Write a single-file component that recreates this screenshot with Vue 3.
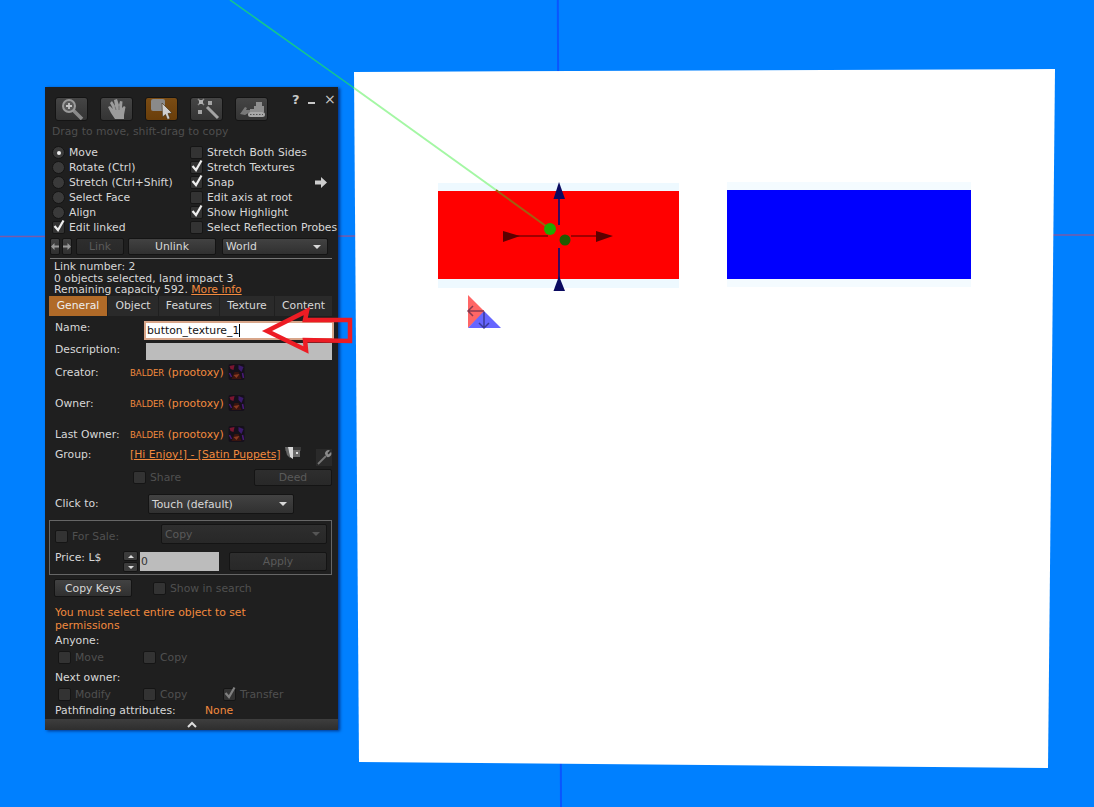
<script setup>
const leftOptions = [
  { label: 'Move', kind: 'radio', on: true },
  { label: 'Rotate (Ctrl)', kind: 'radio' },
  { label: 'Stretch (Ctrl+Shift)', kind: 'radio' },
  { label: 'Select Face', kind: 'radio' },
  { label: 'Align', kind: 'radio' },
  { label: 'Edit linked', kind: 'check', on: true }
]
const rightOptions = [
  { label: 'Stretch Both Sides' },
  { label: 'Stretch Textures', on: true },
  { label: 'Snap', on: true, arrow: true },
  { label: 'Edit axis at root' },
  { label: 'Show Highlight', on: true },
  { label: 'Select Reflection Probes' }
]
const tabs = [
  { label: 'General', width: 58, active: true },
  { label: 'Object', width: 51 },
  { label: 'Features', width: 61 },
  { label: 'Texture', width: 55 },
  { label: 'Content', width: 58 }
]
const people = ['Creator:', 'Owner:', 'Last Owner:']
</script>

<template>
  <div class="scene">
    <svg class="world" width="1094" height="807" viewBox="0 0 1094 807">
      <rect width="1094" height="807" fill="#0080ff" />
      <line x1="0" y1="236.500" x2="1094" y2="235" stroke="#7a5aa8" stroke-width="1.500" />
      <line x1="557.800" y1="0" x2="561" y2="807" stroke="#0a55ff" stroke-width="2" />
      <polygon points="354,72 1055,69 1048,768 359,762" fill="#fff" />
      <rect x="438" y="183" width="241" height="105" fill="#eef9ff" />
      <rect x="727" y="182" width="244" height="105" fill="#f4fbff" />
      <rect x="438" y="191" width="241" height="88" fill="#ff0000" />
      <rect x="727" y="190" width="244" height="89" fill="#0000ff" />
      <line x1="230" y1="0" x2="354" y2="88" stroke="#14c88c" stroke-width="1.500" />
      <line x1="354" y1="88" x2="496" y2="190" stroke="#a4f7a4" stroke-width="2" />
      <line x1="496" y1="190" x2="550" y2="229" stroke="#a06010" stroke-width="2" />

      <line x1="559" y1="195" x2="559" y2="225" stroke="#3a0a5c" stroke-width="2" />
      <line x1="559" y1="248" x2="559" y2="280" stroke="#3a0a5c" stroke-width="2" />
      <polygon points="559,182 553.500,199 565,199" fill="#0a0a60" />
      <polygon points="559,276 553.500,291 565,291" fill="#0a0a60" />
      <line x1="515" y1="236" x2="548" y2="236" stroke="#a00000" stroke-width="2" />
      <line x1="571" y1="236" x2="600" y2="236" stroke="#a00000" stroke-width="2" />
      <polygon points="503,231 520,236 503,242" fill="#5c0000" />
      <polygon points="596,231 613,236 596,242" fill="#5c0000" />
      <circle cx="550" cy="229" r="6" fill="#22aa00" />
      <circle cx="565" cy="240" r="5.500" fill="#1f5a00" />

      <polygon points="468,295 485,312 468,328" fill="#ff6666" />
      <polygon points="468,328 484,311 501,328" fill="#6666ff" />
      <path d="M468 311 H484 M473 306 L468 311 L473 316" fill="none" stroke="#8a3a50" stroke-width="1.500" />
      <path d="M484 312 V328 M479 323 L484 328 L489 323" fill="none" stroke="#3a3a9a" stroke-width="1.500" />
    </svg>

    <div class="panel">
      <div class="win-controls">
        <span class="help">?</span>
        <span class="minimize"></span>
        <span class="close">×</span>
      </div>

      <div class="toolbar">
        <button class="tool">
          <svg width="26" height="22" viewBox="0 0 26 22">
            <path d="M14 12 L23 21" stroke="#8a8a8a" stroke-width="3.500" />
            <circle cx="10" cy="8" r="6" fill="#5a5a5a" stroke="#9a9a9a" stroke-width="2" />
            <path d="M7 8H13M10 5V11" stroke="#c4c4c4" stroke-width="1.800" />
          </svg>
        </button>
        <button class="tool">
          <svg width="26" height="22" viewBox="0 0 26 22">
            <path d="M11 21 L7 15 L4 9 L6 8 L9 11 L6 5 L8 3 L11 8 L10 2 L13 1 L15 7 L16 3 L18.500 3.500 L18 10 L20 8 L21.500 9 L20 17 L20 21 Z" fill="#9c9c9c" />
            <path d="M11 8.500L12 12M15 7.500L15 12" stroke="#666" stroke-width="0.800" />
          </svg>
        </button>
        <button class="tool active">
          <svg width="26" height="22" viewBox="0 0 26 22">
            <rect x="2" y="1" width="14" height="12" rx="2" fill="#8a8a8a" />
            <path d="M13 5 L23 15 L19 15.500 L21 20.500 L18.500 21.500 L16.500 16.500 L13.500 19 Z" fill="#cfcfcf" stroke="#3a2a10" stroke-width="0.600" />
          </svg>
        </button>
        <button class="tool">
          <svg width="26" height="22" viewBox="0 0 26 22">
            <path d="M13 9 L24 20" stroke="#a4a4a4" stroke-width="3" />
            <path d="M4 1 L10 7 M10 1 L4 7" stroke="#8a8a8a" stroke-width="1.500" />
            <rect x="5" y="2" width="4" height="4" fill="#b0b0b0" />
            <rect x="14" y="3" width="4" height="4" fill="#a4a4a4" />
            <rect x="4" y="12" width="4" height="4" fill="#a4a4a4" />
          </svg>
        </button>
        <button class="tool">
          <svg width="28" height="20" viewBox="0 0 28 20">
            <path d="M12 10 H16 V7 H18 V3 H24 V7 H26 V13 H12 Z" fill="#8e8e8e" />
            <path d="M2 15 L7 8 L9 9 L8 11 H12 V13 L7 16 Z" fill="#7a7a7a" />
            <rect x="10" y="13" width="17" height="5" rx="2.500" fill="#a8a8a8" />
            <path d="M12 15.500H25" stroke="#555" stroke-width="1" stroke-dasharray="1.500 1.500" />
          </svg>
        </button>
      </div>

      <div class="hint">Drag to move, shift-drag to copy</div>

      <div class="options">
        <div class="opt-col left">
          <div v-for="o in leftOptions" :key="o.label" class="opt">
            <span v-if="o.kind === 'radio'" class="radio" :class="{ on: o.on }"></span>
            <span v-else class="check">
              <svg v-if="o.on" class="tick" width="14" height="14" viewBox="0 0 14 14"><path d="M2.500 7 L6 11 L11.500 1.500" fill="none" stroke="#eee" stroke-width="2.200" /></svg>
            </span>
            <span>{{ o.label }}</span>
          </div>
        </div>
        <div class="opt-col right">
          <div v-for="o in rightOptions" :key="o.label" class="opt">
            <span class="check">
              <svg v-if="o.on" class="tick" width="14" height="14" viewBox="0 0 14 14"><path d="M2.500 7 L6 11 L11.500 1.500" fill="none" stroke="#eee" stroke-width="2.200" /></svg>
            </span>
            <span class="nowrap">{{ o.label }}</span>
            <svg v-if="o.arrow" class="snap-arrow" width="12" height="11" viewBox="0 0 12 11"><path d="M0 3.500H6V0L12 5.500L6 11V7.500H0Z" fill="#ccc" /></svg>
          </div>
        </div>
      </div>

      <div class="actions">
        <button class="btn tiny"><svg width="8" height="7" viewBox="0 0 8 7"><path d="M0 3.500L3.500 0V2.500H8V4.500H3.500V7Z" fill="#999" /></svg></button>
        <button class="btn tiny gap2"><svg width="8" height="7" viewBox="0 0 8 7"><path d="M8 3.500L4.500 0V2.500H0V4.500H4.500V7Z" fill="#999" /></svg></button>
        <button class="btn dim link-btn">Link</button>
        <button class="btn unlink-btn">Unlink</button>
        <button class="btn combo world-combo"><span>World</span><i class="caret"></i></button>
      </div>

      <div class="sep"></div>

      <div class="info">
        <div class="l1">Link number: 2</div>
        <div class="l1">0 objects selected, land impact 3</div>
        <div class="l2">Remaining capacity 592. <a class="orange-link">More info</a></div>
      </div>

      <div class="tabs">
        <div
          v-for="t in tabs"
          :key="t.label"
          class="tab"
          :class="{ active: t.active }"
          :style="{ width: t.width + 'px' }"
        >{{ t.label }}</div>
      </div>

      <div class="row name-row">
        <span class="lbl">Name:</span>
        <div class="name-input">button_texture_1<i class="cursor"></i></div>
      </div>
      <div class="row desc-row">
        <span class="lbl">Description:</span>
        <div class="desc-input"></div>
      </div>

      <div v-for="p in people" :key="p" class="person">
        <span class="lbl">{{ p }}</span>
        <span class="person-name"><span class="small-caps">BALDER</span> (prootoxy)</span>
        <svg class="avatar" width="17" height="16" viewBox="0 0 16 16">
          <rect width="16" height="16" rx="2" fill="#15101a" />
          <path d="M1 2L6 1L5 6L2 5Z" fill="#7a1530" />
          <path d="M10 1L15 3L13 8L10 5Z" fill="#3a1a6a" />
          <path d="M3 15L6 8L10 8L13 15Z" fill="#3a1510" />
          <path d="M5 11L8 14L11 10Z" fill="#8a3a20" />
          <path d="M1 9L3 13M14 9L15 14" stroke="#4a1a7a" stroke-width="1.500" />
        </svg>
      </div>

      <div class="group-row">
        <span class="lbl">Group:</span>
        <a class="orange-link group-link">[Hi Enjoy!] - [Satin Puppets]</a>
        <svg class="group-icon" width="16" height="14" viewBox="0 0 16 14">
          <rect width="16" height="4" fill="#3a3a3a" />
          <path d="M0 0H3L5 11L2 8Z" fill="#666" />
          <path d="M3 0H8L8 12L5 10Z" fill="#d8d8d8" />
          <rect x="8" y="3" width="7" height="7" fill="#6a6a6a" />
          <rect x="11" y="5" width="2" height="2" fill="#ddd" />
        </svg>
        <span class="wrench-btn">
          <svg width="16" height="17" viewBox="0 0 16 17"><path d="M2 15L10 7" stroke="#777" stroke-width="1.800" /><path d="M9 5A3.500 3.500 0 0 1 14 1.500L11.500 4L12.500 5.500L15 3A3.500 3.500 0 0 1 11 8Z" fill="#8a8a8a" /></svg>
        </span>
      </div>

      <div class="share-row">
        <span class="check"></span>
        <span class="dim-text">Share</span>
        <button class="btn dim deed">Deed</button>
      </div>

      <div class="click-row">
        <span class="lbl">Click to:</span>
        <button class="btn combo click-combo"><span>Touch  (default)</span><i class="caret"></i></button>
      </div>

      <div class="sale-box">
        <div class="sale-top">
          <span class="check"></span>
          <span class="dim-text sale-label">For Sale:</span>
          <button class="btn dim combo sale-combo"><span>Copy</span><i class="caret dark"></i></button>
        </div>
        <div class="sale-bottom">
          <span class="price-label">Price: L$</span>
          <div class="spinner">
            <button class="spin"><i class="up"></i></button>
            <button class="spin"><i class="down"></i></button>
          </div>
          <div class="price-input">0</div>
          <button class="btn dim apply">Apply</button>
        </div>
      </div>

      <div class="keys-row">
        <button class="btn keys">Copy Keys</button>
        <span class="check"></span>
        <span class="dim-text">Show in search</span>
      </div>

      <div class="warn">You must select entire object to set<br />permissions</div>

      <div class="section-label anyone">Anyone:</div>
      <div class="perm-row r1">
        <span class="check"></span><span class="dim-text perm-a">Move</span>
        <span class="check"></span><span class="dim-text">Copy</span>
      </div>
      <div class="section-label next">Next owner:</div>
      <div class="perm-row r2">
        <span class="check"></span><span class="dim-text perm-a">Modify</span>
        <span class="check"></span><span class="dim-text perm-b">Copy</span>
        <span class="check">
          <svg class="tick" width="14" height="14" viewBox="0 0 14 14"><path d="M2.500 7 L6 11 L11.500 1.500" fill="none" stroke="#808080" stroke-width="2.200" /></svg>
        </span>
        <span class="dim-text">Transfer</span>
      </div>
      <div class="path-row">
        <span class="path-label">Pathfinding attributes:</span>
        <span class="orange">None</span>
      </div>

      <div class="footer">
        <svg width="10" height="7" viewBox="0 0 10 7"><path d="M1 6L5 2L9 6" fill="none" stroke="#ddd" stroke-width="2" /></svg>
      </div>
    </div>

    <svg class="annotation" width="1094" height="807" viewBox="0 0 1094 807">
      <polygon points="267,331 307,311 305,320 350,320 350,341 305,340 306,350" fill="none" stroke="#ed1c24" stroke-width="4.500" />
    </svg>
  </div>
</template>

<style>
body {
  margin: 0;
  background: #0080ff;
}
</style>

<style scoped>
.scene {
  position: relative;
  width: 1094px;
  height: 807px;
  overflow: hidden;
  font-family: "DejaVu Sans", sans-serif;
  font-size: 10.8px;
  color: #d8d8d8;
}

.world,
.annotation {
  position: absolute;
  left: 0;
  top: 0;
}

.annotation {
  pointer-events: none;
}

.panel {
  position: absolute;
  left: 45px;
  top: 87px;
  width: 293px;
  height: 643px;
  background: #1f1f1f;
  box-shadow: 2px 1px 3px rgba(0, 0, 60, 0.6);
  display: flex;
  flex-direction: column;
}

button {
  font-family: inherit;
  font-size: 10.8px;
  padding: 0;
  margin: 0;
}

.win-controls {
  position: absolute;
  right: 5px;
  top: 5px;
  display: flex;
  align-items: center;
  color: #c8c8c8;
}

.help {
  font-weight: bold;
  font-size: 13px;
  width: 16px;
}

.minimize {
  width: 7px;
  height: 2px;
  background: #c8c8c8;
  margin: 7px 9px 0 0;
}

.close {
  font-size: 14px;
  line-height: 14px;
  width: 9px;
  margin-top: -1px;
}

.toolbar {
  display: flex;
  gap: 12px;
  margin-top: 10px;
  padding-left: 10px;
}

.tool {
  width: 33px;
  height: 24px;
  border: 1px solid #141414;
  border-radius: 3px;
  background: linear-gradient(#454545, #343434);
  display: flex;
  align-items: center;
  justify-content: center;
}

.tool.active {
  background: linear-gradient(#7a4c14, #6a3e0a);
}

.hint {
  margin-top: 3px;
  height: 15px;
  line-height: 15px;
  padding-left: 7px;
  color: #4e4e4e;
}

.options {
  display: flex;
  margin-top: 6px;
  height: 90px;
}

.opt-col.left {
  width: 145px;
  flex: none;
  padding-left: 7px;
  box-sizing: border-box;
}

.opt-col.right {
  flex: 1;
  min-width: 0;
}

.opt {
  display: flex;
  align-items: center;
  height: 15px;
  gap: 4px;
  position: relative;
}

.nowrap {
  white-space: nowrap;
}

.radio {
  width: 13px;
  height: 13px;
  border-radius: 50%;
  background: #3a3a3a;
  border: 1px solid #141414;
  box-sizing: border-box;
  display: block;
  position: relative;
  flex: none;
}

.radio.on::after {
  content: "";
  position: absolute;
  left: 3.500px;
  top: 3.500px;
  width: 4px;
  height: 4px;
  border-radius: 50%;
  background: #eee;
}

.check {
  width: 13px;
  height: 13px;
  flex: none;
  border: 1px solid #151515;
  border-radius: 2px;
  background: #333;
  box-sizing: border-box;
  position: relative;
  display: block;
}

.tick {
  position: absolute;
  left: -1px;
  top: -3px;
}

.snap-arrow {
  position: absolute;
  left: 125px;
  top: 2px;
}

.actions {
  display: flex;
  margin-top: 3px;
  padding-left: 5px;
  height: 17px;
}

.btn {
  height: 17px;
  border: 1px solid #141414;
  border-radius: 2px;
  background: linear-gradient(#424242, #303030);
  color: #d8d8d8;
  display: flex;
  align-items: center;
  justify-content: center;
  box-sizing: border-box;
}

.btn.dim {
  background: linear-gradient(#2e2e2e, #282828);
  color: #5a5a5a;
}

.btn.tiny {
  width: 10px;
}

.gap2 {
  margin-left: 2px;
}

.link-btn {
  width: 48px;
  margin-left: 4px;
}

.unlink-btn {
  width: 88px;
  margin-left: 4px;
}

.combo {
  justify-content: space-between;
  padding: 0 6px 0 3px;
  white-space: pre;
}

.world-combo {
  width: 106px;
  margin-left: 6px;
}

.caret {
  width: 0;
  height: 0;
  border-left: 4px solid transparent;
  border-right: 4px solid transparent;
  border-top: 4px solid #d8d8d8;
}

.caret.dark {
  border-top-color: #555;
}

.sep {
  height: 1px;
  background: #777;
  margin: 3px 6px 0 5px;
}

.info {
  padding-left: 9px;
  color: #d8d8d8;
  margin-top: 2px;
}

.l1 {
  height: 12px;
  line-height: 12px;
}

.l2 {
  height: 10px;
  line-height: 10px;
}

.orange-link {
  color: #f28a3e;
  text-decoration: underline;
}

.orange {
  color: #f28a3e;
}

.tabs {
  display: flex;
  height: 20px;
  margin: 1px 0 0 4px;
}

.tab {
  background: #2a2a2a;
  text-align: center;
  line-height: 19px;
  border-left: 1px solid #1f1f1f;
  box-sizing: border-box;
}

.tab.active {
  background: #b06a28;
  color: #eee;
  border-left: none;
}

.row {
  display: flex;
  align-items: flex-start;
  padding-left: 10px;
}

.lbl {
  line-height: 14px;
  height: 12px;
  display: block;
}

.name-row {
  margin-top: 5px;
  height: 19px;
}

.name-row .lbl {
  width: 89px;
}

.name-input {
  width: 190px;
  height: 19px;
  box-sizing: border-box;
  background: #fff;
  border: 2px solid #d8a68a;
  color: #111;
  line-height: 15px;
  padding-left: 1px;
  white-space: nowrap;
}

.cursor {
  display: inline-block;
  width: 1px;
  height: 13px;
  background: #000;
  vertical-align: -3px;
}

.desc-row {
  margin-top: 3px;
  height: 17px;
}

.desc-row .lbl {
  width: 91px;
}

.desc-input {
  width: 186px;
  height: 17px;
  background: #bcbcbc;
}

.person {
  display: flex;
  align-items: center;
  height: 12px;
  margin-top: 19px;
  padding-left: 10px;
}

.person .lbl {
  width: 75px;
}

.desc-row + .person {
  margin-top: 6px;
}

.person-name {
  color: #f28a3e;
  white-space: nowrap;
}

.small-caps {
  font-size: 8.500px;
}

.avatar {
  margin-left: 4px;
  flex: none;
}

.group-row {
  position: relative;
  display: flex;
  align-items: center;
  height: 12px;
  margin-top: 8px;
  padding-left: 10px;
}

.group-row .lbl {
  width: 75px;
}

.group-link {
  white-space: nowrap;
}

.group-icon {
  margin-left: 4px;
  flex: none;
}

.wrench-btn {
  position: absolute;
  left: 271px;
  top: 1px;
  width: 16px;
  height: 17px;
  background: #2a2a2a;
}

.share-row {
  display: flex;
  align-items: center;
  height: 17px;
  margin-top: 9px;
  padding-left: 88px;
  gap: 4px;
}

.dim-text {
  color: #505050;
  white-space: nowrap;
}

.deed {
  width: 78px;
  position: absolute;
  left: 209px;
}

.click-row {
  display: flex;
  align-items: center;
  height: 20px;
  margin-top: 8px;
  padding-left: 10px;
}

.click-row .lbl {
  width: 93px;
  margin-top: -2px;
}

.click-combo {
  width: 146px;
  height: 20px;
}

.sale-box {
  height: 55px;
  margin: 6px 6px 0 4px;
  border: 1px solid #666;
  box-sizing: border-box;
}

.sale-top {
  display: flex;
  align-items: center;
  height: 20px;
  margin-top: 3px;
  padding-left: 5px;
}

.sale-top .check {
  margin-top: 4px;
}

.sale-label {
  width: 89px;
  margin-left: 4px;
  margin-top: 4px;
}

.sale-combo {
  width: 166px;
  height: 20px;
}

.sale-bottom {
  display: flex;
  align-items: flex-start;
  margin-top: 7px;
  padding-left: 5px;
  height: 21px;
}

.price-label {
  width: 68px;
  line-height: 14px;
}

.spinner {
  width: 15px;
  display: flex;
  flex-direction: column;
}

.spin {
  height: 10px;
  width: 15px;
  border: 1px solid #141414;
  border-radius: 2px;
  background: #3c3c3c;
  display: flex;
  align-items: center;
  justify-content: center;
  box-sizing: border-box;
  margin-bottom: 1px;
}

.up,
.down {
  width: 0;
  height: 0;
  border-left: 3px solid transparent;
  border-right: 3px solid transparent;
}

.up {
  border-bottom: 3px solid #ddd;
}

.down {
  border-top: 3px solid #ddd;
}

.price-input {
  width: 79px;
  height: 19px;
  margin: 1px 0 0 2px;
  background: #bcbcbc;
  color: #333;
  line-height: 20px;
  padding-left: 1px;
  box-sizing: border-box;
}

.apply {
  width: 98px;
  height: 19px;
  margin: 1px 0 0 10px;
}

.keys-row {
  display: flex;
  align-items: center;
  height: 18px;
  margin-top: 4px;
  padding-left: 9px;
}

.keys {
  width: 78px;
  height: 18px;
  margin-right: 21px;
}

.keys-row .check {
  margin-right: 4px;
}

.warn {
  color: #f28a3e;
  line-height: 13px;
  margin-top: 9px;
  padding-left: 10px;
}

.section-label {
  padding-left: 10px;
  line-height: 14px;
  height: 12px;
}

.anyone {
  margin-top: 2px;
}

.next {
  margin-top: 7px;
}

.perm-row {
  display: flex;
  align-items: center;
  height: 14px;
  padding-left: 13px;
  gap: 4px;
}

.r1 {
  margin-top: 4px;
}

.r2 {
  margin-top: 4px;
}

.perm-a {
  width: 64px;
}

.perm-b {
  width: 59px;
}

.path-row {
  display: flex;
  height: 12px;
  line-height: 14px;
  margin-top: 3px;
  padding-left: 10px;
}

.path-label {
  width: 150px;
}

.footer {
  position: absolute;
  left: 0;
  right: 0;
  bottom: 0;
  height: 11px;
  background: linear-gradient(#3e3e3e, #2e2e2e);
  display: flex;
  align-items: center;
  justify-content: center;
}
</style>
